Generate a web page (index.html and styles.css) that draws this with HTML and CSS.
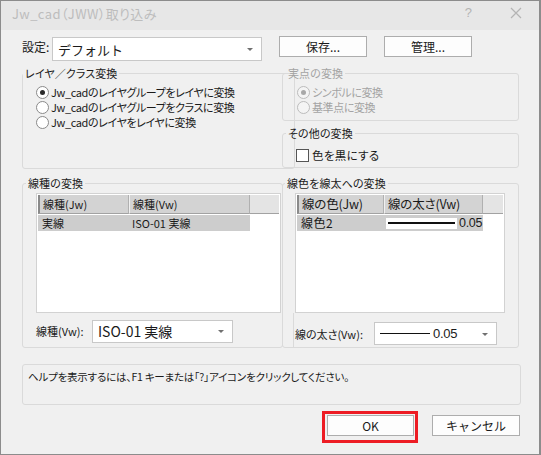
FILE: index.html
```html
<!DOCTYPE html>
<html lang="ja">
<head>
<meta charset="utf-8">
<title>Jw_cad（JWW）取り込み</title>
<link rel="stylesheet" href="styles.css">
</head>
<body>
<div class="window">
  <div class="titlebar">
    <span class="title">Jw_cad（JWW）取り込み</span>
    <span class="tb-help">?</span>
    <svg class="tb-close" width="12" height="12" viewBox="0 0 12 12"><path d="M1 1L11 11M11 1L1 11" stroke="#b4b4b4" stroke-width="1.2" fill="none"/></svg>
  </div>
  <div class="content">
    <div class="row-settings">
      <span class="lbl-settings">設定:</span>
      <div class="combo combo-settings"><span>デフォルト</span><i class="arrow"></i></div>
      <button class="btn btn-save">保存...</button>
      <button class="btn btn-manage">管理...</button>
    </div>

    <div class="section-top">
      <fieldset class="group group-layer">
        <legend class="legend-tight">レイヤ／クラス変換</legend>
        <div class="radios">
          <div class="radio-row"><span class="radio checked"></span><span>Jw_cadのレイヤグループをレイヤに変換</span></div>
          <div class="radio-row"><span class="radio"></span><span>Jw_cadのレイヤグループをクラスに変換</span></div>
          <div class="radio-row"><span class="radio"></span><span>Jw_cadのレイヤをレイヤに変換</span></div>
        </div>
      </fieldset>
      <div class="col-right">
        <fieldset class="group group-point disabled">
          <legend>実点の変換</legend>
          <div class="radios radios-small">
            <div class="radio-row"><span class="radio checked"></span><span>シンボルに変換</span></div>
            <div class="radio-row"><span class="radio"></span><span>基準点に変換</span></div>
          </div>
        </fieldset>
        <fieldset class="group group-other">
          <legend>その他の変換</legend>
          <div class="check-row"><span class="checkbox"></span><span>色を黒にする</span></div>
        </fieldset>
      </div>
    </div>

    <div class="section-bottom">
      <fieldset class="group group-ltype">
        <legend>線種の変換</legend>
        <div class="list list-ltype">
          <div class="list-head">
            <span class="hcell c1">線種(Jw)</span>
            <span class="hcell c2">線種(Vw)</span>
            <span class="hfill"></span>
          </div>
          <div class="list-row">
            <span class="cell c1">実線</span>
            <span class="cell c2">ISO-01 実線</span>
          </div>
        </div>
        <div class="field-row">
          <span class="field-lbl lbl-ltype">線種(Vw):</span>
          <div class="combo combo-ltype"><span>ISO-01 実線</span><i class="arrow"></i></div>
        </div>
      </fieldset>
      <fieldset class="group group-lweight">
        <legend>線色を線太への変換</legend>
        <div class="list list-lweight">
          <div class="list-head">
            <span class="hcell d1">線の色(Jw)</span>
            <span class="hcell d2">線の太さ(Vw)</span>
            <span class="hfill"></span>
          </div>
          <div class="list-row">
            <span class="cell d1">線色2</span>
            <span class="cell d2"><span class="line-sample"><i></i></span><span class="num">0.05</span></span>
          </div>
        </div>
        <div class="field-row field-row-right">
          <span class="field-lbl lbl-lweight">線の太さ(Vw):</span>
          <div class="combo combo-lweight"><span class="combo-line"></span><span class="num">0.05</span><i class="arrow"></i></div>
        </div>
      </fieldset>
    </div>

    <div class="helpbox">ヘルプを表示するには、F1 キーまたは「?」アイコンをクリックしてください。</div>

    <div class="row-buttons">
      <span class="highlight"><button class="btn btn-ok">OK</button></span>
      <button class="btn btn-cancel">キャンセル</button>
    </div>
  </div>
</div>
</body>
</html>
```
FILE: styles.css
```css
* { box-sizing: border-box; }
html, body { margin: 0; padding: 0; }
body {
  font-family: "Noto Sans CJK JP", "Liberation Sans", sans-serif;
  font-size: 12px;
  color: #1a1a1a;
  background: #f0f0f0;
}
.window {
  width: 541px;
  height: 455px;
  border: 1px solid #8c8c8c;
  border-right-width: 2px;
  background: #f0f0f0;
  overflow: hidden;
}
.titlebar {
  height: 29px;
  background: #e7e7e7;
  display: flex;
  align-items: center;
  padding-left: 11px;
}
.title {
  color: #bdbdbd;
  font-size: 13px;
  font-feature-settings: "palt";
  letter-spacing: 0.4px;
  flex: 1;
  margin-top: -4px;
}
.tb-help {
  color: #b4b4b4;
  font-family: "Liberation Sans", sans-serif;
  font-size: 13px;
  margin-right: 38px;
  margin-top: -6px;
}
.tb-close { margin-right: 17px; margin-top: -6px; }

.content { padding: 6px 19px 0 21px; }

button { font-family: inherit; font-size: 12px; color: #1a1a1a; }
.btn {
  height: 21px;
  width: 88px;
  background: #fdfdfd;
  border: 1px solid #adadad;
  padding: 0;
  line-height: 18px;
}

.row-settings { display: flex; align-items: flex-start; height: 25px; }
.lbl-settings { width: 30px; line-height: 20px; padding-top: 1px; }
.combo {
  background: #fff;
  border: 1px solid #c8c8c8;
  display: flex;
  align-items: center;
  position: relative;
  padding-left: 5px;
}
.combo-settings { width: 210px; height: 24px; margin-top: 1px; font-size: 13px; }
.arrow {
  position: absolute;
  right: 8px;
  top: 50%;
  margin-top: -1px;
  width: 0; height: 0;
  border-left: 3px solid transparent;
  border-right: 3px solid transparent;
  border-top: 3px solid #707070;
}
.btn-save { margin-left: 17px; }
.btn-manage { margin-left: 17px; }

fieldset.group {
  margin: 0;
  padding: 0;
  border: 1px solid #dadada;
  border-radius: 3px;
  min-width: 0;
}
legend {
  margin-left: 3px;
  padding: 0 2px;
  line-height: 14px;
  font-size: 11px;
  font-feature-settings: "palt";
  letter-spacing: 0.1px;
}
legend.legend-tight { margin-left: 0; }
.group-ltype legend { margin-left: -10px; }
.group-lweight legend { margin-left: -10px; }
.disabled, .disabled legend { color: #a3a3a3; }

.section-top { display: flex; margin-top: 5px; }
.group-layer { width: 273px; height: 103px; }
.col-right { width: 237px; margin-left: -13px; display: flex; flex-direction: column; }
.group-point { height: 55px; }
fieldset.group-other { height: 42px; margin-top: 5px; }

.radios { padding: 5px 0 0 13px; }
.radios-small { padding: 5px 0 0 14px; }
.radio-row {
  display: flex; align-items: center; height: 15px; line-height: 15px;
  font-size: 11px; font-feature-settings: "palt"; letter-spacing: -0.4px;
  white-space: nowrap;
}
.radio {
  width: 13px; height: 13px;
  border: 1px solid #8a8a8a;
  border-radius: 50%;
  background: #fff;
  margin-right: 2px;
  display: flex; align-items: center; justify-content: center;
  flex: none;
}
.radio.checked::after {
  content: "";
  width: 5px; height: 5px;
  border-radius: 50%;
  background: #2a2a2a;
}
.disabled .radio { border-color: #bcbcbc; background: #f4f4f4; }
.disabled .radio.checked::after { background: #a8a8a8; }

.check-row {
  display: flex; align-items: center; padding: 8px 0 0 13px;
  font-size: 11.5px; line-height: 15px; font-feature-settings: "palt"; letter-spacing: 0.3px;
}
.checkbox { width: 13px; height: 13px; border: 1px solid #555; background: #fff; margin-right: 3px; flex: none; }

.section-bottom { display: flex; margin-top: 7px; }
fieldset.group-ltype { width: 261px; height: 172px; padding-left: 13px; }
fieldset.group-lweight { width: 237px; height: 172px; margin-left: -1px; padding-left: 12px; }

.list {
  background: #fff;
  border: 1px solid #d2d2d2;
  height: 120px;
  margin-top: 3px;
  padding: 1px;
}
.list-ltype { width: 245px; }
.list-lweight { width: 210px; }
.list-head { display: flex; height: 19px; }
.hcell {
  background: #d3d3d3;
  border-bottom: 1px solid #a2a2a2;
  border-right: 1px solid #b0b0b0;
  border-left: 1px solid #f0f0f0;
  padding-left: 3px;
  line-height: 18px;
  white-space: nowrap;
  font-size: 11px;
  font-feature-settings: "palt";
}
.hcell.c1, .hcell.d1 { border-left: 2px solid #8a8a8a; }
.hfill { flex: 1; background: #e4e4e4; border-bottom: 1px solid #a2a2a2; }
.c1 { width: 91px; }
.c2 { width: 121px; }
.d1 { width: 87px; }
.d2 { width: 99px; }
.list-lweight .hcell { font-size: 12.5px; letter-spacing: -0.2px; }
.list-row { display: flex; height: 16px; margin-top: 1px; }
.cell {
  background: #cdcdcd;
  padding-left: 4px;
  line-height: 16px;
  white-space: nowrap;
  font-size: 11px;
}
.list-ltype .cell.c2 { padding-left: 3px; }
.list-lweight .cell.d1 { font-size: 12px; letter-spacing: 0.5px; }
.cell.d2 { display: flex; align-items: center; padding-left: 2px; }
.line-sample {
  width: 71px; height: 11px; background: #fff;
  display: flex; align-items: center; padding: 0 2px;
}
.line-sample i { display: block; height: 2px; background: #111; flex: 1; }
.num { font-family: "Liberation Sans Narrow", "Liberation Sans", sans-serif; font-size: 12.5px; margin-left: 2px; letter-spacing: -0.3px; }

.field-row { display: flex; align-items: center; margin-top: 6px; height: 24px; }
.field-lbl { font-size: 11px; font-feature-settings: "palt"; white-space: nowrap; }
.lbl-ltype { width: 56px; }
.lbl-lweight { width: 79px; }
.combo-ltype { width: 141px; height: 23px; font-size: 14px; }
.field-row-right { border-left: 1px solid #dadada; margin-left: -2px; padding-left: 1px; margin-top: 0; padding-top: 6px; height: 35px; }
.combo-lweight { width: 123px; height: 23px; padding-left: 5px; }
.combo-line { width: 50px; height: 1px; background: #111; }
.combo-lweight .num { margin-left: 3px; font-size: 13px; }

.helpbox {
  margin-top: 16px;
  width: 499px;
  height: 41px;
  border: 1px solid #dadada;
  border-radius: 3px;
  padding: 4px 0 0 5px;
  font-size: 10.5px;
  font-feature-settings: "palt";
  letter-spacing: -0.2px;
}

.row-buttons { display: flex; justify-content: flex-end; align-items: flex-start; margin-top: 6px; }
.highlight {
  display: inline-flex;
  border: 3px solid #ed1c24;
  padding: 1px 1px 4px 2px;
}
.btn-ok { width: 87px; }
.btn-cancel { width: 88px; margin-left: 14px; margin-top: 4px; }
```
